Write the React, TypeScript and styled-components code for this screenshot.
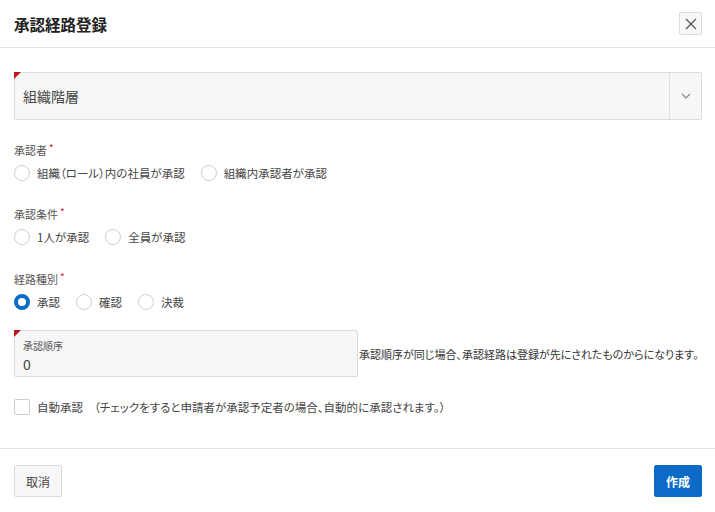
import React, { useState } from 'react';
import styled, { createGlobalStyle, css } from 'styled-components';

const GlobalStyle = createGlobalStyle`
  html, body {
    margin: 0;
    padding: 0;
    background: #fff;
    font-family: "Noto Sans CJK JP", "Noto Sans", sans-serif;
    font-feature-settings: "palt";
    color: #333;
  }
`;

const Dialog = styled.div`
  width: 715px;
  height: 512px;
  display: flex;
  flex-direction: column;
  background: #fff;
`;

const Header = styled.header`
  height: 47px;
  display: flex;
  align-items: center;
  justify-content: space-between;
  padding: 0 13px 0 14px;
  border-bottom: 1px solid #e2e2e2;
`;

const Title = styled.h1`
  margin: 0;
  font-size: 15.5px;
  font-weight: 700;
  color: #222;
  font-feature-settings: normal;
`;

const CloseButton = styled.button`
  width: 23px;
  height: 23px;
  padding: 0;
  display: flex;
  align-items: center;
  justify-content: center;
  background: #f7f7f7;
  border: 1px solid #dcdcdc;
  border-radius: 2px;
  color: #555;
  cursor: pointer;
`;

const Body = styled.div`
  flex: 1;
  padding: 24px 13px 0 14px;
  display: flex;
  flex-direction: column;
`;

const requiredCorner = css`
  &::before {
    content: '';
    position: absolute;
    top: -1px;
    left: -1px;
    border-style: solid;
    border-width: 7px 7px 0 0;
    border-color: #c0161b transparent transparent transparent;
  }
`;

const SelectBox = styled.div`
  position: relative;
  height: 46px;
  display: flex;
  align-items: stretch;
  background: #f7f7f7;
  border: 1px solid #dcdcdc;
  border-radius: 2px;
  ${requiredCorner}
`;

const SelectValue = styled.div`
  flex: 1;
  display: flex;
  align-items: center;
  padding-left: 8px;
  font-size: 14px;
  color: #444;
  font-feature-settings: normal;
`;

const SelectArrow = styled.div`
  width: 31px;
  display: flex;
  align-items: center;
  justify-content: center;
  border-left: 1px solid #e0e0e0;
  color: #888;
`;

const Group = styled.div<{ $top: number }>`
  margin-top: ${(p) => p.$top}px;
  display: flex;
  flex-direction: column;
  gap: 5px;
`;

const Label = styled.div`
  font-size: 11px;
  line-height: 16px;
  color: #555;
`;

const Required = styled.span`
  color: #d0161b;
  font-size: 10px;
  vertical-align: top;
  margin-left: 2px;
  line-height: 12px;
`;

const RadioRow = styled.div`
  display: flex;
  align-items: center;
  gap: 16px;
  height: 20px;
`;

const RadioItem = styled.label`
  display: flex;
  align-items: center;
  gap: 7px;
  font-size: 11.5px;
  color: #444;
  cursor: pointer;
`;

const RadioCircle = styled.span<{ $checked: boolean }>`
  width: 16px;
  height: 16px;
  box-sizing: border-box;
  border-radius: 50%;
  background: #fff;
  border: ${(p) => (p.$checked ? '4px solid #0b6bc7' : '1px solid #cfcfcf')};
`;

const NumberRow = styled.div`
  margin-top: 18px;
  display: flex;
  align-items: center;
  gap: 1px;
`;

const NumberField = styled.div`
  position: relative;
  flex-shrink: 0;
  width: 344px;
  height: 47px;
  box-sizing: border-box;
  padding: 8px 8px 0;
  background: #f7f7f7;
  border: 1px solid #dcdcdc;
  border-radius: 2px;
  ${requiredCorner}
`;

const FieldCaption = styled.div`
  font-size: 10px;
  line-height: 14px;
  color: #555;
`;

const FieldValue = styled.div`
  font-size: 14px;
  line-height: 22px;
  color: #444;
`;

const HelpText = styled.div`
  font-size: 11px;
  color: #333;
  white-space: nowrap;
`;

const CheckRow = styled.label`
  margin-top: 22px;
  display: flex;
  align-items: center;
  font-size: 11.5px;
  color: #444;
`;

const CheckBox = styled.span`
  width: 16px;
  height: 16px;
  box-sizing: border-box;
  border: 1px solid #cfcfcf;
  border-radius: 2px;
  background: #fff;
  margin-right: 7px;
`;

const Note = styled.span`
  margin-left: 11px;
`;

const Footer = styled.footer`
  height: 64px;
  border-top: 1px solid #e2e2e2;
  display: flex;
  align-items: flex-start;
  justify-content: space-between;
  padding: 16px 13px 0 14px;
  box-sizing: border-box;
`;

const Button = styled.button<{ $primary?: boolean }>`
  width: 48px;
  height: 32px;
  padding: 0;
  border-radius: 2px;
  font-family: inherit;
  font-size: 12px;
  cursor: pointer;
  ${(p) =>
    p.$primary
      ? css`
          background: #0b6bc7;
          border: 1px solid #0b6bc7;
          color: #fff;
          font-weight: 700;
        `
      : css`
          background: #f7f7f7;
          border: 1px solid #dcdcdc;
          color: #444;
        `}
`;

type RadioGroupProps = {
  label: string;
  options: string[];
  value: number;
  onChange: (i: number) => void;
  top: number;
};

const RadioGroup: React.FC<RadioGroupProps> = ({ label, options, value, onChange, top }) => (
  <Group $top={top}>
    <Label>
      {label}
      <Required>*</Required>
    </Label>
    <RadioRow>
      {options.map((opt, i) => (
        <RadioItem key={opt} onClick={() => onChange(i)}>
          <RadioCircle $checked={value === i} />
          {opt}
        </RadioItem>
      ))}
    </RadioRow>
  </Group>
);

export default function App() {
  const [approver, setApprover] = useState(-1);
  const [condition, setCondition] = useState(-1);
  const [routeType, setRouteType] = useState(0);

  return (
    <>
      <GlobalStyle />
      <Dialog>
        <Header>
          <Title>承認経路登録</Title>
          <CloseButton aria-label="閉じる">
            <svg width="12" height="12" viewBox="0 0 12 12">
              <path d="M1 1 L11 11 M11 1 L1 11" stroke="#555" strokeWidth="1.2" fill="none" />
            </svg>
          </CloseButton>
        </Header>
        <Body>
          <SelectBox>
            <SelectValue>組織階層</SelectValue>
            <SelectArrow>
              <svg width="10" height="6" viewBox="0 0 10 6">
                <path d="M1 1 L5 5 L9 1" stroke="#888" strokeWidth="1.1" fill="none" />
              </svg>
            </SelectArrow>
          </SelectBox>

          <RadioGroup
            top={22}
            label="承認者"
            options={['組織（ロール）内の社員が承認', '組織内承認者が承認']}
            value={approver}
            onChange={setApprover}
          />
          <RadioGroup
            top={23}
            label="承認条件"
            options={['1人が承認', '全員が承認']}
            value={condition}
            onChange={setCondition}
          />
          <RadioGroup
            top={24}
            label="経路種別"
            options={['承認', '確認', '決裁']}
            value={routeType}
            onChange={setRouteType}
          />

          <NumberRow>
            <NumberField>
              <FieldCaption>承認順序</FieldCaption>
              <FieldValue>0</FieldValue>
            </NumberField>
            <HelpText>承認順序が同じ場合、承認経路は登録が先にされたものからになります。</HelpText>
          </NumberRow>

          <CheckRow>
            <CheckBox />
            自動承認
            <Note>（チェックをすると申請者が承認予定者の場合、自動的に承認されます。）</Note>
          </CheckRow>
        </Body>
        <Footer>
          <Button>取消</Button>
          <Button $primary>作成</Button>
        </Footer>
      </Dialog>
    </>
  );
}
